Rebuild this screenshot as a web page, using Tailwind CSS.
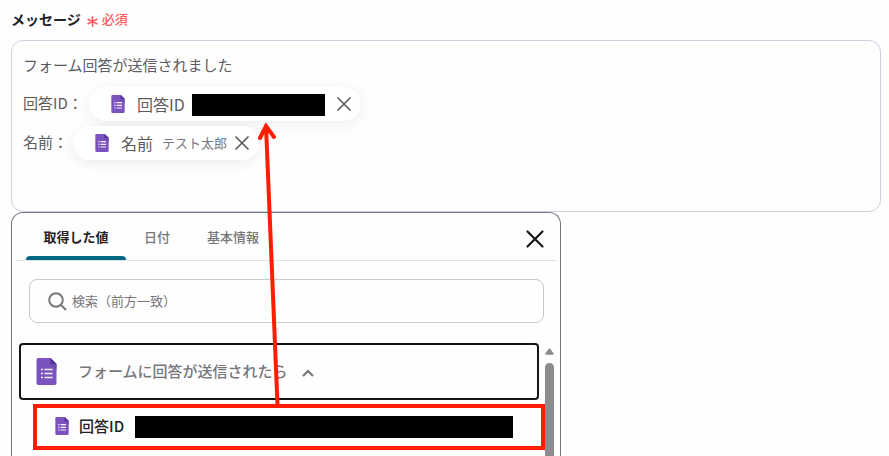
<!DOCTYPE html>
<html lang="ja">
<head>
  <meta charset="UTF-8">
  <meta name="viewport" content="width=device-width, initial-scale=1.0">
  <title>メッセージ</title>
  <script src="https://cdn.jsdelivr.net/npm/@tailwindcss/browser@4"></script>
</head>
<body class="bg-[#fefefe] font-['Noto_Sans_CJK_JP',sans-serif] text-[#5c5b60]">

  <!-- Form icon -->
  <svg class="hidden">
    <symbol id="form-icon" viewBox="0 0 20 27">
      <path d="M2 0H14L20 6V25a2 2 0 0 1-2 2H2a2 2 0 0 1-2-2V2a2 2 0 0 1 2-2Z" fill="#7b53be"/>
      <path d="M14 0L20 6V12L13 6Z" fill="#7049b2"/>
      <path d="M14 0L20 6H14Z" fill="#55359a"/>
      <path d="M4.500 11.500h2M4.500 15.500h2M4.500 19.500h2M8 11.500h8M8 15.500h8M8 19.500h8" stroke="#f4effc" stroke-width="1.700"/>
    </symbol>
    <symbol id="close-icon" viewBox="0 0 16 16">
      <path d="M2 2L14 14M14 2L2 14" fill="none" stroke="currentColor" stroke-width="1.700" stroke-linecap="round"/>
    </symbol>
  </svg>

  <main class="relative flex flex-col h-screen overflow-hidden pl-[11px] pr-2">
    <!-- Label -->
    <div class="flex items-center gap-1 h-10 pb-[2px] shrink-0">
      <span id="message-label" class="text-[14px] leading-6 font-bold text-[#222126]">メッセージ</span>
      <svg class="w-[11px] h-[11px] ml-[2px] mt-[5px]" viewBox="0 0 10 10" fill="none" stroke="#ff5c64" stroke-width="1.500" stroke-linecap="round">
        <path d="M5 .8V9.200M1 3L9 7M9 3L1 7"/>
      </svg>
      <span class="text-[13px] leading-6 font-medium text-[#ff5c64]">必須</span>
    </div>

    <!-- Message body -->
    <div role="textbox" aria-multiline="true" aria-labelledby="message-label" class="h-[172px] shrink-0 border border-[#cdd0df] rounded-xl px-[11px] pt-3 text-[15px] leading-6">
      <p>フォーム回答が送信されました</p>
      <div class="flex items-center mt-[10px]">
        <span class="w-[66px] pb-[2px] whitespace-nowrap">回答ID：</span>
        <span class="flex items-center h-[34px] rounded-full bg-white shadow-[0_3px_12px_rgba(70,40,90,0.09)] pl-[22px] pr-[9px]">
          <svg class="w-[14px] h-[18px]"><use href="#form-icon"/></svg>
          <span class="ml-3 text-base">回答ID</span>
          <span class="w-[133px] h-[22px] ml-[7px] mt-[2px] bg-black"></span>
          <button type="button" aria-label="回答IDを削除" class="ml-[11px]">
            <svg class="w-4 h-4"><use href="#close-icon"/></svg>
          </button>
        </span>
      </div>
      <div class="flex items-center mt-[5px]">
        <span class="w-[50px] pb-[2px] whitespace-nowrap">名前：</span>
        <span class="flex items-center h-[34px] rounded-full bg-white shadow-[0_3px_12px_rgba(70,40,90,0.09)] pl-[22px] pr-[9px]">
          <svg class="w-[14px] h-[18px]"><use href="#form-icon"/></svg>
          <span class="ml-3 text-base">名前</span>
          <span class="ml-[9px] text-[13px] text-[#77767b]">テスト太郎</span>
          <button type="button" aria-label="名前を削除" class="ml-[7px]">
            <svg class="w-4 h-4"><use href="#close-icon"/></svg>
          </button>
        </span>
      </div>
    </div>

    <!-- Value picker -->
    <section class="flex flex-col flex-1 min-h-0 w-full max-w-[550px] border border-b-0 border-[#77767b] rounded-t-xl">
      <div class="flex items-stretch h-12 shrink-0 ml-1 mr-[3px] pl-[10px] pr-3 border-b border-[#e2e1e5] text-[13px] font-medium text-[#77767b]">
        <div role="tablist" class="flex flex-1">
          <button type="button" role="tab" aria-selected="true" class="relative w-[100px] font-bold text-[#222126]">取得した値
            <span class="absolute inset-x-0 bottom-0 h-1 rounded-t bg-[#006782]"></span>
          </button>
          <button type="button" role="tab" aria-selected="false" class="px-[18px]">日付</button>
          <button type="button" role="tab" aria-selected="false" class="px-[19px]">基本情報</button>
        </div>
        <button type="button" aria-label="閉じる" class="mt-1 text-[#15141a]">
          <svg class="w-5 h-5"><use href="#close-icon"/></svg>
        </button>
      </div>

      <label class="flex items-center h-11 shrink-0 mt-[18px] ml-[17px] mr-4 px-[18px] border border-[#c9c8cc] rounded-lg">
        <svg class="w-[19px] h-[19px] shrink-0" viewBox="0 0 19 19" fill="none" stroke="#77767b" stroke-width="2">
          <circle cx="8" cy="8" r="6.800"/>
          <path d="M13 13L18 18"/>
        </svg>
        <input type="text" aria-label="検索" placeholder="検索（前方一致）" class="flex-1 ml-[5px] text-[13px] outline-none placeholder:text-[#77767b]">
      </label>

      <div class="flex flex-1 min-h-0 mt-5 pl-[7px] pr-[6px]">
        <div class="flex-1 min-w-0">
          <button type="button" aria-expanded="true" class="flex items-center w-full max-w-[520px] h-[57px] pl-[15px] border-2 border-[#15141a] rounded text-[15px] font-medium text-[#77767b]">
            <svg class="w-[21px] h-[27px]"><use href="#form-icon"/></svg>
            <span class="ml-[21px]">フォームに回答が送信されたら</span>
            <svg class="w-3 h-2 ml-[14px] mt-[2px]" viewBox="0 0 12 8" fill="none" stroke="currentColor" stroke-width="2.200">
              <path d="M1 7L6 2L11 7"/>
            </svg>
          </button>
          <ul class="mt-1 ml-[14px]">
            <li class="flex items-center h-[46px] pb-[2px] pl-[18px] pr-7 border-4 border-[#ff1c00]">
              <svg class="w-[14px] h-[18px] shrink-0"><use href="#form-icon"/></svg>
              <span class="ml-[10px] text-[15px] font-medium whitespace-nowrap text-[#222126]">回答ID</span>
              <span class="flex-1 h-[22px] ml-[11px] mt-[2px] bg-black"></span>
            </li>
          </ul>
        </div>
        <!-- Scrollbar -->
        <div class="flex flex-col items-center w-[9px] pt-[5px]">
          <svg class="w-[9px] h-[7px] shrink-0" viewBox="0 0 9 7"><path d="M4.500 1L8 6H1Z" fill="#8d8b8e" stroke="#8d8b8e" stroke-width="1.500" stroke-linejoin="round"/></svg>
          <div class="w-[9px] flex-1 mt-2 rounded-t-full bg-[#8d8b8e]"></div>
        </div>
      </div>
    </section>

    <!-- Arrow from the picked value to its chip -->
    <svg class="absolute left-[256px] top-[120px] w-[28px] h-[286px] pointer-events-none" viewBox="0 0 28 286" fill="none" stroke="#ff1c00" stroke-width="4" stroke-linecap="round">
      <path d="M21.500 285L10 6M4 18L10 6L18 17"/>
    </svg>
  </main>

</body>
</html>
